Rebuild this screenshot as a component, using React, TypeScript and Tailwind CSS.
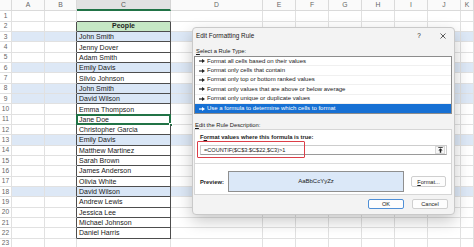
import React from 'react';

const names: Record<number, string> = {
  3: 'John Smith',
  4: 'Jenny Dover',
  5: 'Adam Smith',
  6: 'Emily Davis',
  7: 'Silvio Johnson',
  8: 'John Smith',
  9: 'David Wilson',
  10: 'Emma Thompson',
  11: 'Jane Doe',
  12: 'Christopher Garcia',
  13: 'Emily Davis',
  14: 'Matthew Martinez',
  15: 'Sarah Brown',
  16: 'James Anderson',
  17: 'Olivia White',
  18: 'David Wilson',
  19: 'Andrew Lewis',
  20: 'Jessica Lee',
  21: 'Michael Johnson',
  22: 'Daniel Harris',
};

const dupRows = [3, 6, 8, 9, 13, 18];
const cols = ['A', 'B', 'C', 'D', 'E', 'F', 'G', 'H', 'I', 'J', 'K'];
const rows = Array.from({ length: 23 }, (_, i) => i + 1);

const ruleTypes = [
  'Format all cells based on their values',
  'Format only cells that contain',
  'Format only top or bottom ranked values',
  'Format only values that are above or below average',
  'Format only unique or duplicate values',
  'Use a formula to determine which cells to format',
];

function Bullet({ light }: { light?: boolean }) {
  return (
    <svg width="6" height="4" viewBox="0 0 6 4" className="shrink-0">
      <path d="M0 1.4h3.4v1.2H0z" fill={light ? '#fff' : '#222'} />
      <path d="M3 0l3 2-3 2z" fill={light ? '#fff' : '#222'} />
    </svg>
  );
}

function HeaderCell({ col }: { col: string }) {
  if (col === 'C') {
    return (
      <div className="flex items-center justify-center bg-[#e2e2e2] border-r border-r-[#d4d4d4] border-b-2 border-b-[#217346] text-[6.8px] text-[#555]">
        {col}
      </div>
    );
  }
  return (
    <div className="flex items-center justify-center bg-[#fafafa] border-r border-b border-[#dadada] text-[6.8px] text-[#666]">
      {col}
    </div>
  );
}

function Cell({ row, col }: { row: number; col: string }) {
  const dup = dupRows.includes(row);
  const inRange = row >= 2 && row <= 22;

  if (col === 'C' && row === 2) {
    return (
      <div className="flex items-center justify-center bg-[#c6e8c5] border-r border-b border-[#4d4d4d] text-[7px] font-bold text-[#1f1f1f]">
        People
      </div>
    );
  }

  if (col === 'C' && inRange) {
    return (
      <div
        className={
          dup
            ? 'relative flex items-center pl-[2px] bg-[#d9e6f6] border-r border-b border-[#4d4d4d] text-[7px] text-[#1a1a1a]'
            : 'relative flex items-center pl-[2px] bg-white border-r border-b border-[#4d4d4d] text-[7px] text-[#1a1a1a]'
        }
      >
        <span className="whitespace-nowrap leading-none">{names[row]}</span>
        {row === 11 && (
          <>
            <div className="absolute -left-[1px] -top-[1px] -right-[1px] -bottom-[1px] border-2 border-[#217346]" />
            <div className="absolute -right-[2.5px] -bottom-[2.5px] w-[4px] h-[4px] bg-[#217346] border border-white" />
          </>
        )}
      </div>
    );
  }

  if (col === 'C' && row === 1) {
    return <div className="bg-white border-r border-r-[#e1e1e1] border-b border-b-[#4d4d4d]" />;
  }

  if (col === 'B' && inRange) {
    return (
      <div
        className={
          dup
            ? 'bg-[#dde8f6] border-r border-b border-r-[#4d4d4d] border-b-[#e1e1e1]'
            : 'bg-white border-r border-b border-r-[#4d4d4d] border-b-[#e1e1e1]'
        }
      />
    );
  }

  return (
    <div
      className={
        dup ? 'bg-[#dde8f6] border-r border-b border-[#e1e1e1]' : 'bg-white border-r border-b border-[#e1e1e1]'
      }
    />
  );
}

function Button({ children, primary, className }: { children: React.ReactNode; primary?: boolean; className: string }) {
  return (
    <div
      className={
        primary
          ? `flex items-center justify-center bg-[#fdfdfd] border border-[#4f8fd6] rounded-[2px] text-[5.6px] text-[#1a1a1a] ${className}`
          : `flex items-center justify-center bg-[#fdfdfd] border border-[#cfcfcf] rounded-[2px] text-[5.6px] text-[#1a1a1a] ${className}`
      }
    >
      {children}
    </div>
  );
}

export default function App() {
  return (
    <div className="relative w-[474px] h-[247px] overflow-hidden bg-white font-['Liberation_Sans',Arial,sans-serif]">
      {/* Feuille */}
      <div className="grid grid-cols-[12px_33px_32px_94px_92px_33px_33px_33px_33px_33px_33px_13px] grid-rows-[11.4px_repeat(23,10.33px)]">
        <div className="bg-[#fafafa] border-r border-b border-[#dadada]" />
        {cols.map((c) => (
          <HeaderCell key={c} col={c} />
        ))}
        {rows.map((r) => (
          <React.Fragment key={r}>
            <div className="flex items-center justify-center bg-white border-r border-b border-[#e1e1e1] text-[6.6px] text-[#666]">
              {r}
            </div>
            {cols.map((c) => (
              <Cell key={c} row={r} col={c} />
            ))}
          </React.Fragment>
        ))}
      </div>

      {/* Boîte de dialogue */}
      <div className="absolute left-[192px] top-[27px] w-[263px] h-[188px] flex flex-col bg-[#f3f3f3] border border-[#c9c9c9] rounded-[4px] shadow-[0_6px_16px_rgba(0,0,0,0.22)] text-[#1a1a1a]">
        <div className="h-[15px] flex items-center pl-[3px] pr-[5px]">
          <span className="text-[6.4px] whitespace-nowrap">Edit Formatting Rule</span>
          <span className="ml-auto w-[12px] text-center text-[6.4px]">?</span>
          <span className="ml-[12px] w-[12px] flex justify-center">
            <svg width="6" height="6" viewBox="0 0 6 6">
              <path d="M0.5 0.5l5 5M5.5 0.5l-5 5" stroke="#333" strokeWidth="0.8" />
            </svg>
          </span>
        </div>

        <div className="mt-[4px] h-[9px] flex items-center pl-[3px] text-[5.8px] whitespace-nowrap">
          <span className="underline">S</span>elect a Rule Type:
        </div>

        <div className="ml-[1px] w-[258px] flex flex-col bg-white border border-[#8c8c8c]">
          {ruleTypes.map((t, i) =>
            i === ruleTypes.length - 1 ? (
              <div key={t} className="h-[9.4px] flex items-center gap-[1px] pl-[4px] bg-[#1670d4] text-white text-[6px] whitespace-nowrap">
                <Bullet light />
                <span className="ml-[1px]">{t}</span>
              </div>
            ) : (
              <div key={t} className="h-[9.4px] flex items-center gap-[1px] pl-[4px] border-b border-[#f0f0f0] text-[6px] whitespace-nowrap">
                <Bullet />
                <span className="ml-[1px]">{t}</span>
              </div>
            )
          )}
        </div>

        <div className="mt-[6px] h-[9px] flex items-center pl-[2px] text-[5.8px] whitespace-nowrap">
          <span className="underline">E</span>dit the Rule Description:
        </div>

        <div className="relative ml-[1px] w-[258px] h-[66px] flex flex-col bg-white border border-[#d6d6d6]">
          <div className="mt-[2.5px] h-[9px] flex items-center pl-[5px] text-[5.8px] font-bold whitespace-nowrap">
            F<span className="underline">o</span>rmat values where this formula is true:
          </div>
          <div className="mt-[3.5px] ml-[5px] w-[247px] h-[10px] flex items-center bg-white border border-[#cdcdcd] border-b-[#9a9a9a]">
            <span className="pl-[3px] text-[5.6px] whitespace-nowrap">=COUNTIF($C$3:$C$22,$C3)&gt;1</span>
            <div className="ml-auto mr-[1px] w-[10px] h-[8px] flex items-center justify-center bg-[#f7f7f7] border border-[#d8d8d8]">
              <svg width="5" height="6" viewBox="0 0 5 6">
                <path d="M0.3 0.5h4.4" stroke="#222" strokeWidth="0.8" />
                <path d="M2.5 1.3L4.6 3.6H3.2V5.8H1.8V3.6H0.4z" fill="#222" />
              </svg>
            </div>
          </div>
          <div className="mt-[8px] h-px bg-[#dcdcdc]" />
          <div className="mt-[7px] flex items-center">
            <span className="w-[33px] pl-[5px] text-[5.8px] font-bold whitespace-nowrap">Preview:</span>
            <div className="w-[176px] h-[21px] flex items-center justify-center bg-[#dbe8f8] border border-[#8f8f8f] text-[6px]">
              AaBbCcYyZz
            </div>
            <Button className="ml-[7px] w-[35px] h-[11px]">
              <span className="underline">F</span>ormat...
            </Button>
          </div>
          {/* encadré rouge */}
          <div className="absolute left-[2px] top-[11px] w-[108px] h-[17px] border-[1.5px] border-[#dc3e48] rounded-[1px]" />
        </div>

        <div className="mt-[4px] flex justify-end gap-[8px] pr-[6px]">
          <Button primary className="w-[36px] h-[9.5px]">
            OK
          </Button>
          <Button className="w-[36px] h-[9.5px]">Cancel</Button>
        </div>
      </div>
    </div>
  );
}
